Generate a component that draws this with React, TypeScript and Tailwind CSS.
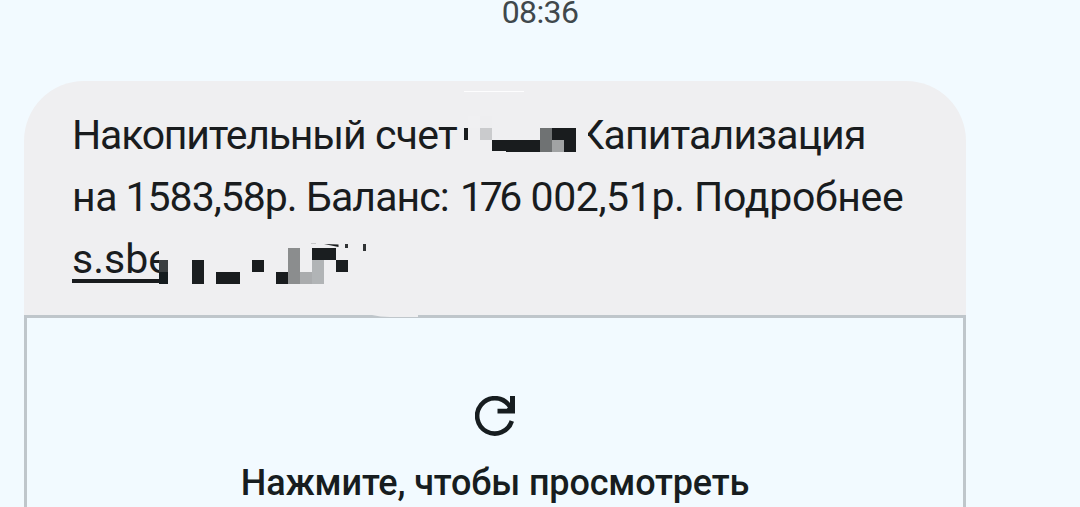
const INK = '#191c1e'

// Redaction tiles laid over the message: x, y, width, height, colour
const tiles: [number, number, number, number, string][] = [
  [464, 91, 60, 1, '#fdfdfe'],
  [468, 116, 12, 12, '#f0f0f2'],
  [480, 116, 12, 12, '#eeeef0'],
  [464, 128, 4, 12, INK],
  [480, 128, 12, 12, '#cacbcd'],
  [492, 140, 48, 12, INK],
  [492, 151, 14, 1, '#efeff1'],
  [540, 128, 12, 24, '#6f7273'],
  [552, 128, 24, 24, INK],
  [552, 140, 12, 12, '#a1a3a4'],
  [159, 260, 9, 12, '#3b3f41'],
  [159, 272, 9, 12, '#151c1f'],
  [192, 260, 12, 24, '#1a1e20'],
  [216, 272, 24, 12, INK],
  [252, 260, 12, 12, INK],
  [276, 272, 12, 12, INK],
  [288, 248, 12, 36, '#8b8d8e'],
  [300, 272, 12, 12, '#aaacae'],
  [312, 248, 24, 12, '#1a1e20'],
  [312, 260, 12, 24, '#b1b4b6'],
  [336, 260, 12, 12, '#1a1e20'],
  [345, 244, 3, 4, '#303335'],
  [363, 244, 3, 7, '#303335'],
]

function Redaction() {
  return (
    <svg className="pointer-events-none absolute inset-0" width="1080" height="507" viewBox="0 0 1080 507" shapeRendering="crispEdges">
      <rect x="577" y="112" width="11" height="44" fill="#efeff1" />
      <rect x="159" y="240" width="20" height="44" fill="#efeff1" />
      {tiles.map(([x, y, w, h, fill], i) => (
        <rect key={i} x={x} y={y} width={w} height={h} fill={fill} />
      ))}
      <path d="M311 243h5v1h-5z" fill="#c8c9cb" />
      <path d="M324 244l14.5 0.5v2.5z" fill={INK} shapeRendering="auto" />
      <path d="M372 315h46v2h-28q-10 0-18-2z" fill="#efeff1" shapeRendering="auto" />
    </svg>
  )
}

function ReloadIcon() {
  return (
    <svg width="40" height="40" viewBox="0 0 40 40" fill="none">
      <path d="M36.8 25A17.7 17.7 0 1 1 33.5 8.6L36 12" stroke="#171d20" strokeWidth="4.6" />
      <path d="M35 0H40v17.4H22.5V12.8h9.2l3.3-3.3z" fill="#171d20" />
    </svg>
  )
}

export default function App() {
  return (
    <div className="relative h-[507px] w-[1080px] overflow-hidden bg-[#f2faff] font-['Roboto','Noto_Sans',sans-serif] text-[#191c1e]">
      <div className="h-[81px] text-center text-[32px] leading-[25px] tracking-[-0.6px] text-[#40484c]">08:36</div>

      <div className="ml-6 w-[942px]">
        {/* Message bubble */}
        <div className="h-[234px] rounded-t-[60px] bg-[#efeff1] pt-[23px] pl-12 text-[41px] leading-[62px] whitespace-nowrap">
          <div className="flex">
            <span className="w-[303px] tracking-[-1.2px]">Накопительный </span>
            <span className="w-[203px] tracking-[-0.8px]">счет </span>
            <span className="tracking-[-0.85px]">Капитализация</span>
          </div>
          <div className="flex">
            <span className="w-[53.5px] tracking-[-0.5px]">на </span>
            <span className="w-[180.5px] tracking-[-1px]">1583,58р. </span>
            <span className="w-[154px] tracking-[-0.9px]">Баланс: </span>
            <span className="w-[70.5px] tracking-[-3.4px]">176 </span>
            <span className="w-[163.5px] tracking-[-0.4px]">002,51р. </span>
            <span className="tracking-[-0.25px]">Подробнее</span>
          </div>
          <div className="flex">
            <span className="relative">
              s.sbe
              <span className="absolute top-[51px] left-0 h-1 w-[87px] bg-[#191c1e]" />
            </span>
          </div>
        </div>

        {/* Preview placeholder */}
        <div className="flex h-[260px] flex-col items-center border-[3px] border-[#bfc6cb] pt-[78px]">
          <ReloadIcon />
          <div className="mt-[22px] text-[36px] leading-[50px] font-medium tracking-[-0.15px] whitespace-nowrap text-[#171d20]">
            Нажмите, чтобы просмотреть
          </div>
        </div>
      </div>

      <Redaction />
    </div>
  )
}
